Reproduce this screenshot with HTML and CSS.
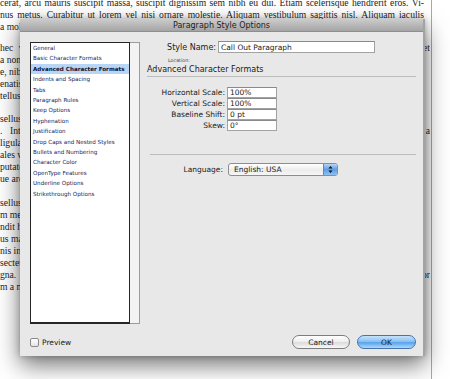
FILE: index.html
```html
<!DOCTYPE html>
<html>
<head>
<meta charset="utf-8">
<link rel="stylesheet" href="styles.css">
</head>
<body>
<div class="canvas">
  <div class="page">
    <div class="para p1">
      <div class="line full">cerat, arcu mauris suscipit massa, suscipit dignissim sem nibh eu dui. Etiam scelerisque hendrerit eros. Vi-</div>
      <div class="line full">nus metus. Curabitur ut lorem vel nisi ornare molestie. Aliquam vestibulum sagittis nisl. Aliquam iaculis</div>
      <div class="line">a mollis. Integer eu orci vitae nunc.</div>
    </div>
    <div class="para p2">
      <div class="line edge">hec vitae nunc sed magna interdum bibendum. Quisque in massa ut nisl tincidunt tempus posuere et</div>
      <div class="line">a non lectus. Donec sit amet nunc eu libero rhoncus dictum. Nulla facilisi.</div>
      <div class="line">e, nibh quis tincidunt convallis, purus nisi gravida neque, in varius.</div>
      <div class="line">enatis. Ut sodales mollis quam, at faucibus neque pellentesque vel.</div>
      <div class="line">tellus.</div>
    </div>
    <div class="para p3">
      <div class="line">sellus ultrices, lacus sit amet aliquam facilisis, leo magna varius.</div>
      <div class="line edge">. Integer faucibus convallis magna, vitae aliquet nulla porttitor sed. Sed nisi augue, placerat a</div>
      <div class="line">ligula ut ligula tempus posuere. Vestibulum ante ipsum primis in faucibus.</div>
      <div class="line">ales vitae, commodo eget, mauris. Mauris lorem tortor, laoreet.</div>
      <div class="line">putate sed, tortor. Curabitur luctus mollis ipsum.</div>
      <div class="line">ue arcu.</div>
    </div>
    <div class="para">
      <div class="line">sellus vel magna eget ligula sodales pharetra. Nulla facilisi.</div>
      <div class="line">m metus. Quisque in dui vitae orci lacinia tincidunt.</div>
      <div class="line">ndit hendrerit. Donec consequat viverra arcu.</div>
      <div class="line">us massa. Nunc in odio sit amet justo.</div>
      <div class="line">nis in metus ac ligula gravida.</div>
      <div class="line">sectetuer adipiscing elit. Morbi.</div>
      <div class="line edge">gna. Proin sollicitudin, nibh sit amet condimentum ultricies, lectus nisl faucibus mauris, vel por</div>
      <div class="line">m a mauris.</div>
    </div>
  </div>

  <div class="dialog">
    <div class="titlebar">Paragraph Style Options</div>
    <div class="main">
      <div class="list">
        <ul class="items">
          <li>General</li>
          <li>Basic Character Formats</li>
          <li class="selected">Advanced Character Formats</li>
          <li>Indents and Spacing</li>
          <li>Tabs</li>
          <li>Paragraph Rules</li>
          <li>Keep Options</li>
          <li>Hyphenation</li>
          <li>Justification</li>
          <li>Drop Caps and Nested Styles</li>
          <li>Bullets and Numbering</li>
          <li>Character Color</li>
          <li>OpenType Features</li>
          <li>Underline Options</li>
          <li>Strikethrough Options</li>
        </ul>
        <div class="scroll"></div>
      </div>
      <div class="panel">
        <div class="name-row">
          <span class="name-label">Style Name:</span>
          <span class="field name-field">Call Out Paragraph</span>
        </div>
        <div class="location">Location:</div>
        <div class="section-title">Advanced Character Formats</div>
        <div class="fields">
          <span class="flabel">Horizontal Scale:</span><span class="field small">100%</span>
          <span class="flabel">Vertical Scale:</span><span class="field small">100%</span>
          <span class="flabel">Baseline Shift:</span><span class="field small">0 pt</span>
          <span class="flabel">Skew:</span><span class="field small">0°</span>
        </div>
        <div class="sep"></div>
        <div class="lang-row">
          <span class="lang-label">Language:</span>
          <span class="popup">
            <span class="popup-text">English: USA</span>
            <span class="stepper">
              <svg width="5" height="9" viewBox="0 0 5 9"><polygon points="2.5,1 4.5,3.5 0.5,3.5" fill="#111"/><polygon points="2.5,8 4.5,5.5 0.5,5.5" fill="#111"/></svg>
            </span>
          </span>
        </div>
      </div>
    </div>
    <div class="footer">
      <span class="check"></span>
      <span class="preview">Preview</span>
      <span class="spacer"></span>
      <span class="btn cancel">Cancel</span>
      <span class="btn ok">OK</span>
    </div>
  </div>
</div>
</body>
</html>
```

FILE: styles.css
```css
html, body {
  margin: 0;
  padding: 0;
  background: #ffffff;
}

.canvas {
  position: relative;
  width: 450px;
  height: 379px;
  overflow: hidden;
}

.page {
  width: 432px;
  height: 379px;
  box-sizing: border-box;
  border-right: 1px solid #b994e6;
  overflow: hidden;
  font-family: "Liberation Serif", "Times New Roman", serif;
  font-size: 9.6px;
  line-height: 12px;
  color: #1e1e1e;
}

.para {
  margin-bottom: 12px;
}

.para.p1 {
  margin-top: -3px;
  margin-bottom: 9px;
}

.para.p2 {
  margin-bottom: 11px;
}

.para.p3 {
  margin-bottom: 12px;
}

.line {
  height: 12px;
  white-space: nowrap;
}

.line.full {
  width: 424px;
  white-space: normal;
  overflow: hidden;
  word-spacing: -1px;
  text-align: justify;
  text-align-last: justify;
}

.line.edge {
  width: 430px;
  white-space: normal;
  overflow: hidden;
  word-spacing: -1px;
  text-align: justify;
  text-align-last: justify;
}

/* Dialog */
.dialog {
  position: absolute;
  left: 20px;
  top: 19px;
  width: 405px;
  height: 337px;
  box-sizing: border-box;
  background: #e8e8e8;
  border-right: 2px solid #a3a3a3;
  box-shadow: 0 9px 22px rgba(0, 0, 0, 0.55), 0 0 6px rgba(0, 0, 0, 0.25);
  display: flex;
  flex-direction: column;
  font-family: "DejaVu Sans", "Verdana", sans-serif;
  color: #1a1a1a;
}

.titlebar {
  height: 13px;
  line-height: 13px;
  text-align: center;
  font-size: 8px;
  color: #1e1e1e;
  background: linear-gradient(to bottom, #cccccc, #a4a4a4);
  border-bottom: 1px solid #8e8e8e;
  box-sizing: border-box;
}

.main {
  display: flex;
  gap: 7px;
  padding: 10px 7px 0 10px;
}

.list {
  display: flex;
  width: 110px;
  height: 282px;
  flex: none;
}

.items {
  list-style: none;
  margin: 0;
  padding: 0;
  flex: 1;
  background: #ffffff;
  border: 1px solid #262626;
  border-bottom-width: 2px;
  font-size: 5.6px;
  line-height: 10.4px;
  color: #222255;
}

.items li {
  padding-left: 2px;
  white-space: nowrap;
}

.items li.selected {
  background: #b8d5f6;
  font-weight: bold;
  color: #111133;
}

.scroll {
  width: 9px;
  background: #f3f3f3;
  border: 1px solid #9c9c9c;
  border-left: none;
}

.panel {
  flex: 1;
  display: flex;
  flex-direction: column;
}

.name-row {
  display: flex;
  align-items: center;
  margin-top: -1px;
  height: 12px;
}

.name-label {
  width: 69px;
  text-align: right;
  font-size: 8px;
  margin-right: 2px;
}

.field {
  background: #ffffff;
  border: 1px solid #a2a2a2;
  border-top-color: #8a8a8a;
  box-sizing: border-box;
  font-size: 7.5px;
  padding-left: 2px;
  display: flex;
  align-items: center;
  white-space: nowrap;
}

.name-field {
  width: 157px;
  height: 12px;
}

.location {
  font-size: 4.8px;
  color: #444;
  margin-left: 21px;
  margin-top: 5px;
  line-height: 6px;
}

.section-title {
  font-size: 8px;
  line-height: 10px;
  margin-top: 1px;
  padding-bottom: 1px;
  border-bottom: 1px solid #bcbcbc;
  white-space: nowrap;
}

.fields {
  display: grid;
  grid-template-columns: 78px 50px;
  column-gap: 2px;
  row-gap: 0;
  grid-auto-rows: 11px;
  align-items: center;
  margin-top: 10px;
}

.flabel {
  text-align: right;
  font-size: 7.5px;
  white-space: nowrap;
}

.field.small {
  height: 11px;
}

.sep {
  margin: 23px 0 0 3px;
  border-top: 1px solid #bcbcbc;
}

.lang-row {
  display: flex;
  align-items: center;
  margin-top: 8px;
  height: 13px;
}

.lang-label {
  width: 76px;
  text-align: right;
  font-size: 7.5px;
  margin-right: 5px;
}

.popup {
  width: 110px;
  height: 13px;
  box-sizing: border-box;
  border: 1px solid #8d8d8d;
  border-radius: 3px;
  background: linear-gradient(to bottom, #ffffff, #ececec 55%, #f6f6f6);
  display: flex;
  align-items: center;
  overflow: hidden;
}

.popup-text {
  flex: 1;
  font-size: 7.5px;
  padding-left: 5px;
}

.stepper {
  width: 13px;
  height: 100%;
  background: linear-gradient(to bottom, #b5d6f7, #5d9fe6 50%, #8cc0f2);
  border-left: 1px solid #5e86bc;
  display: flex;
  align-items: center;
  justify-content: center;
}

.footer {
  margin-top: auto;
  display: flex;
  align-items: center;
  padding: 0 7px 7px 10px;
}

.check {
  width: 9px;
  height: 9px;
  box-sizing: border-box;
  border: 1px solid #8a8a8a;
  border-radius: 2px;
  background: linear-gradient(to bottom, #ffffff, #e4e4e4);
}

.preview {
  font-size: 7.5px;
  margin-left: 3px;
}

.spacer {
  flex: 1;
}

.btn {
  height: 14px;
  box-sizing: border-box;
  border-radius: 7px;
  font-size: 7.5px;
  display: flex;
  align-items: center;
  justify-content: center;
}

.cancel {
  width: 58px;
  border: 1px solid #7d7d7d;
  background: linear-gradient(to bottom, #ffffff, #f0f0f0 45%, #dcdcdc 55%, #f8f8f8);
  margin-right: 7px;
}

.ok {
  width: 59px;
  border: 1px solid #4a73ad;
  background: linear-gradient(to bottom, #c6e2fb, #8ac3f3 45%, #5aa3eb 55%, #a9dbfb);
}
```
